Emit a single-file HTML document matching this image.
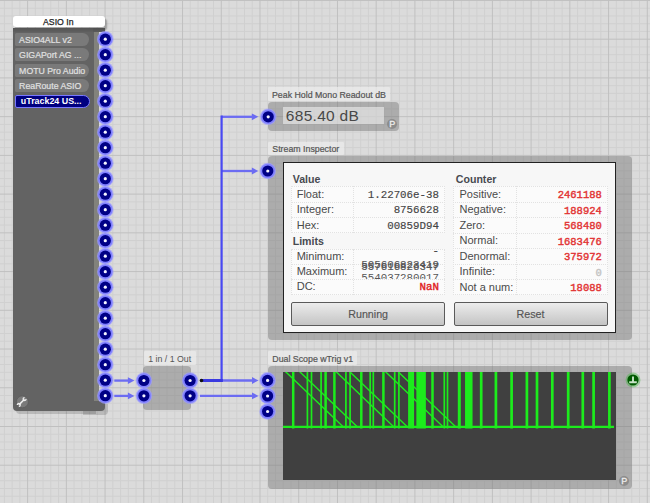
<!DOCTYPE html>
<html><head><meta charset="utf-8"><style>
html,body{margin:0;padding:0;}
body{width:650px;height:503px;position:relative;overflow:hidden;background:#dbdbdb;font-family:"Liberation Sans",sans-serif;}
.abs{position:absolute;}
.t{position:absolute;white-space:pre;line-height:1;}
.s{-webkit-text-stroke:0.25px currentColor;}
.mono{font-family:"Liberation Mono",monospace;}
</style></head>
<body>
<svg class="abs" width="650" height="503" style="left:0;top:0"><g stroke="#d0d0d0" stroke-width="1"><line x1="4.36" y1="0" x2="4.36" y2="503"/><line x1="12.11" y1="0" x2="12.11" y2="503"/><line x1="19.85" y1="0" x2="19.85" y2="503"/><line x1="35.35" y1="0" x2="35.35" y2="503"/><line x1="43.09" y1="0" x2="43.09" y2="503"/><line x1="50.84" y1="0" x2="50.84" y2="503"/><line x1="58.58" y1="0" x2="58.58" y2="503"/><line x1="74.08" y1="0" x2="74.08" y2="503"/><line x1="81.82" y1="0" x2="81.82" y2="503"/><line x1="89.57" y1="0" x2="89.57" y2="503"/><line x1="97.31" y1="0" x2="97.31" y2="503"/><line x1="112.81" y1="0" x2="112.81" y2="503"/><line x1="120.55" y1="0" x2="120.55" y2="503"/><line x1="128.30" y1="0" x2="128.30" y2="503"/><line x1="136.04" y1="0" x2="136.04" y2="503"/><line x1="151.54" y1="0" x2="151.54" y2="503"/><line x1="159.28" y1="0" x2="159.28" y2="503"/><line x1="167.03" y1="0" x2="167.03" y2="503"/><line x1="174.77" y1="0" x2="174.77" y2="503"/><line x1="190.27" y1="0" x2="190.27" y2="503"/><line x1="198.01" y1="0" x2="198.01" y2="503"/><line x1="205.76" y1="0" x2="205.76" y2="503"/><line x1="213.50" y1="0" x2="213.50" y2="503"/><line x1="229.00" y1="0" x2="229.00" y2="503"/><line x1="236.74" y1="0" x2="236.74" y2="503"/><line x1="244.49" y1="0" x2="244.49" y2="503"/><line x1="252.23" y1="0" x2="252.23" y2="503"/><line x1="267.73" y1="0" x2="267.73" y2="503"/><line x1="275.47" y1="0" x2="275.47" y2="503"/><line x1="283.22" y1="0" x2="283.22" y2="503"/><line x1="290.96" y1="0" x2="290.96" y2="503"/><line x1="306.46" y1="0" x2="306.46" y2="503"/><line x1="314.20" y1="0" x2="314.20" y2="503"/><line x1="321.95" y1="0" x2="321.95" y2="503"/><line x1="329.69" y1="0" x2="329.69" y2="503"/><line x1="345.19" y1="0" x2="345.19" y2="503"/><line x1="352.93" y1="0" x2="352.93" y2="503"/><line x1="360.68" y1="0" x2="360.68" y2="503"/><line x1="368.42" y1="0" x2="368.42" y2="503"/><line x1="383.92" y1="0" x2="383.92" y2="503"/><line x1="391.66" y1="0" x2="391.66" y2="503"/><line x1="399.41" y1="0" x2="399.41" y2="503"/><line x1="407.15" y1="0" x2="407.15" y2="503"/><line x1="422.65" y1="0" x2="422.65" y2="503"/><line x1="430.39" y1="0" x2="430.39" y2="503"/><line x1="438.14" y1="0" x2="438.14" y2="503"/><line x1="445.88" y1="0" x2="445.88" y2="503"/><line x1="461.38" y1="0" x2="461.38" y2="503"/><line x1="469.12" y1="0" x2="469.12" y2="503"/><line x1="476.87" y1="0" x2="476.87" y2="503"/><line x1="484.61" y1="0" x2="484.61" y2="503"/><line x1="500.11" y1="0" x2="500.11" y2="503"/><line x1="507.85" y1="0" x2="507.85" y2="503"/><line x1="515.60" y1="0" x2="515.60" y2="503"/><line x1="523.34" y1="0" x2="523.34" y2="503"/><line x1="538.84" y1="0" x2="538.84" y2="503"/><line x1="546.58" y1="0" x2="546.58" y2="503"/><line x1="554.33" y1="0" x2="554.33" y2="503"/><line x1="562.07" y1="0" x2="562.07" y2="503"/><line x1="577.57" y1="0" x2="577.57" y2="503"/><line x1="585.31" y1="0" x2="585.31" y2="503"/><line x1="593.06" y1="0" x2="593.06" y2="503"/><line x1="600.80" y1="0" x2="600.80" y2="503"/><line x1="616.30" y1="0" x2="616.30" y2="503"/><line x1="624.04" y1="0" x2="624.04" y2="503"/><line x1="631.79" y1="0" x2="631.79" y2="503"/><line x1="639.53" y1="0" x2="639.53" y2="503"/><line x1="0" y1="8.20" x2="650" y2="8.20"/><line x1="0" y1="15.94" x2="650" y2="15.94"/><line x1="0" y1="23.69" x2="650" y2="23.69"/><line x1="0" y1="31.43" x2="650" y2="31.43"/><line x1="0" y1="46.93" x2="650" y2="46.93"/><line x1="0" y1="54.67" x2="650" y2="54.67"/><line x1="0" y1="62.42" x2="650" y2="62.42"/><line x1="0" y1="70.16" x2="650" y2="70.16"/><line x1="0" y1="85.66" x2="650" y2="85.66"/><line x1="0" y1="93.40" x2="650" y2="93.40"/><line x1="0" y1="101.15" x2="650" y2="101.15"/><line x1="0" y1="108.89" x2="650" y2="108.89"/><line x1="0" y1="124.39" x2="650" y2="124.39"/><line x1="0" y1="132.13" x2="650" y2="132.13"/><line x1="0" y1="139.88" x2="650" y2="139.88"/><line x1="0" y1="147.62" x2="650" y2="147.62"/><line x1="0" y1="163.12" x2="650" y2="163.12"/><line x1="0" y1="170.86" x2="650" y2="170.86"/><line x1="0" y1="178.61" x2="650" y2="178.61"/><line x1="0" y1="186.35" x2="650" y2="186.35"/><line x1="0" y1="201.85" x2="650" y2="201.85"/><line x1="0" y1="209.59" x2="650" y2="209.59"/><line x1="0" y1="217.34" x2="650" y2="217.34"/><line x1="0" y1="225.08" x2="650" y2="225.08"/><line x1="0" y1="240.58" x2="650" y2="240.58"/><line x1="0" y1="248.32" x2="650" y2="248.32"/><line x1="0" y1="256.07" x2="650" y2="256.07"/><line x1="0" y1="263.81" x2="650" y2="263.81"/><line x1="0" y1="279.31" x2="650" y2="279.31"/><line x1="0" y1="287.05" x2="650" y2="287.05"/><line x1="0" y1="294.80" x2="650" y2="294.80"/><line x1="0" y1="302.54" x2="650" y2="302.54"/><line x1="0" y1="318.04" x2="650" y2="318.04"/><line x1="0" y1="325.78" x2="650" y2="325.78"/><line x1="0" y1="333.53" x2="650" y2="333.53"/><line x1="0" y1="341.27" x2="650" y2="341.27"/><line x1="0" y1="356.77" x2="650" y2="356.77"/><line x1="0" y1="364.51" x2="650" y2="364.51"/><line x1="0" y1="372.26" x2="650" y2="372.26"/><line x1="0" y1="380.00" x2="650" y2="380.00"/><line x1="0" y1="395.50" x2="650" y2="395.50"/><line x1="0" y1="403.24" x2="650" y2="403.24"/><line x1="0" y1="410.99" x2="650" y2="410.99"/><line x1="0" y1="418.73" x2="650" y2="418.73"/><line x1="0" y1="434.23" x2="650" y2="434.23"/><line x1="0" y1="441.97" x2="650" y2="441.97"/><line x1="0" y1="449.72" x2="650" y2="449.72"/><line x1="0" y1="457.46" x2="650" y2="457.46"/><line x1="0" y1="472.96" x2="650" y2="472.96"/><line x1="0" y1="480.70" x2="650" y2="480.70"/><line x1="0" y1="488.45" x2="650" y2="488.45"/><line x1="0" y1="496.19" x2="650" y2="496.19"/></g><g stroke="#c0c0c0" stroke-width="1"><line x1="27.60" y1="0" x2="27.60" y2="503"/><line x1="66.33" y1="0" x2="66.33" y2="503"/><line x1="105.06" y1="0" x2="105.06" y2="503"/><line x1="143.79" y1="0" x2="143.79" y2="503"/><line x1="182.52" y1="0" x2="182.52" y2="503"/><line x1="221.25" y1="0" x2="221.25" y2="503"/><line x1="259.98" y1="0" x2="259.98" y2="503"/><line x1="298.71" y1="0" x2="298.71" y2="503"/><line x1="337.44" y1="0" x2="337.44" y2="503"/><line x1="376.17" y1="0" x2="376.17" y2="503"/><line x1="414.90" y1="0" x2="414.90" y2="503"/><line x1="453.63" y1="0" x2="453.63" y2="503"/><line x1="492.36" y1="0" x2="492.36" y2="503"/><line x1="531.09" y1="0" x2="531.09" y2="503"/><line x1="569.82" y1="0" x2="569.82" y2="503"/><line x1="608.55" y1="0" x2="608.55" y2="503"/><line x1="647.28" y1="0" x2="647.28" y2="503"/><line x1="0" y1="0.45" x2="650" y2="0.45"/><line x1="0" y1="39.18" x2="650" y2="39.18"/><line x1="0" y1="77.91" x2="650" y2="77.91"/><line x1="0" y1="116.64" x2="650" y2="116.64"/><line x1="0" y1="155.37" x2="650" y2="155.37"/><line x1="0" y1="194.10" x2="650" y2="194.10"/><line x1="0" y1="232.83" x2="650" y2="232.83"/><line x1="0" y1="271.56" x2="650" y2="271.56"/><line x1="0" y1="310.29" x2="650" y2="310.29"/><line x1="0" y1="349.02" x2="650" y2="349.02"/><line x1="0" y1="387.75" x2="650" y2="387.75"/><line x1="0" y1="426.48" x2="650" y2="426.48"/><line x1="0" y1="465.21" x2="650" y2="465.21"/><line x1="0" y1="503.94" x2="650" y2="503.94"/></g></svg>
<div class="abs" style="left:15.3px;top:19.3px;width:92.2px;height:11px;border-radius:3px;background:rgba(0,0,0,0.22);box-shadow:0 0 1.5px 0.5px rgba(0,0,0,0.15)"></div>
<div class="abs" style="left:15.8px;top:30px;width:80.3px;height:384px;border-radius:0 0 0 4px;background:rgba(0,0,0,0.15)"></div>
<div class="abs" style="left:12.8px;top:27.5px;width:81px;height:383.2px;border-radius:0 0 0 4px;background:#636363"></div>
<div class="abs" style="left:83px;top:404px;width:25px;height:10.5px;border-radius:0 0 4px 0;background:rgba(0,0,0,0.15)"></div>
<div class="abs" style="left:80px;top:401px;width:25px;height:9.7px;border-radius:0 0 4px 0;background:#636363"></div>
<div class="abs" style="left:93.8px;top:31px;width:5.5px;height:370px;background:#82827c"></div>
<div class="abs" style="left:93px;top:27.5px;width:12px;height:4px;background:#5e5e5e"></div>
<div class="abs" style="left:12.8px;top:16.4px;width:92.2px;height:10.9px;border-radius:3px;background:#fff"></div>
<div class="t" style="left:12.2px;top:18.0px;width:92.2px;text-align:center;font-size:8.7px;color:#222;-webkit-text-stroke:0.25px #222">ASIO In</div>
<div class="abs" style="left:12.8px;top:27.5px;width:92.2px;height:4.5px;background:linear-gradient(rgba(0,0,0,0.16),rgba(0,0,0,0.04))"></div>
<div class="abs" style="left:15.4px;top:32.8px;width:74px;height:12.9px;border-radius:1.5px 6.4px 6.4px 1.5px;background:#7a7a7a"></div>
<div class="t" style="left:19.1px;top:35.599999999999994px;font-size:8.75px;color:#e0e0e0;-webkit-text-stroke:0.2px #e0e0e0">ASIO4ALL v2</div>
<div class="abs" style="left:15.4px;top:48.3px;width:74px;height:12.9px;border-radius:1.5px 6.4px 6.4px 1.5px;background:#7a7a7a"></div>
<div class="t" style="left:19.1px;top:51.099999999999994px;font-size:8.75px;color:#e0e0e0;-webkit-text-stroke:0.2px #e0e0e0">GIGAPort AG ...</div>
<div class="abs" style="left:15.4px;top:63.8px;width:74px;height:12.9px;border-radius:1.5px 6.4px 6.4px 1.5px;background:#7a7a7a"></div>
<div class="t" style="left:19.1px;top:66.6px;font-size:8.75px;color:#e0e0e0;-webkit-text-stroke:0.2px #e0e0e0">MOTU Pro Audio</div>
<div class="abs" style="left:15.4px;top:79.3px;width:74px;height:12.9px;border-radius:1.5px 6.4px 6.4px 1.5px;background:#7a7a7a"></div>
<div class="t" style="left:19.1px;top:82.1px;font-size:8.75px;color:#e0e0e0;-webkit-text-stroke:0.2px #e0e0e0">ReaRoute ASIO</div>
<div class="abs" style="left:15.4px;top:94.8px;width:74.4px;height:13.3px;border-radius:2px 6.6px 6.6px 2px;background:#000080;box-sizing:border-box;border:1.6px solid #7878ff"></div>
<div class="t" style="left:20.8px;top:97.39999999999999px;font-size:8.9px;color:#fff;font-weight:bold">uTrack24 US...</div>
<svg class="abs" width="24" height="24" style="left:10px;top:390px"><circle cx="12.4" cy="11.8" r="6" fill="#7a7a7a" stroke="#5c5c5c" stroke-width="0.8"/><path d="M9.4 14.4 L14 9.8" stroke="#f0f0f0" stroke-width="1.5" stroke-linecap="round"/><path d="M16.1 9.1 A1.5 1.5 0 1 1 14.6 7.6" stroke="#f0f0f0" stroke-width="1.3" fill="none"/><path d="M8.8 16.5 A1.5 1.5 0 1 0 7.3 15.0" stroke="#f0f0f0" stroke-width="1.3" fill="none"/></svg>
<div class="abs" style="left:144.2px;top:351.2px;width:52.1px;height:13.6px;background:rgba(236,236,236,0.72);border-radius:1px"></div>
<div class="t" style="left:148.5px;top:354.4px;font-size:8.8px;color:#555;-webkit-text-stroke:0.2px #555"></div>
<div class="t" style="left:143.9px;top:354.8px;width:51.5px;text-align:center;font-size:8.8px;color:#555">1 in / 1 Out</div>
<div class="abs" style="left:143.2px;top:365.8px;width:47.5px;height:44.4px;background:rgba(115,115,115,0.45);border-radius:4px"></div>
<div class="abs" style="left:267.7px;top:87.3px;width:122.5px;height:13.8px;background:rgba(236,236,236,0.72);border-radius:1px"></div>
<div class="t" style="left:272.0px;top:90.5px;font-size:8.8px;color:#555;-webkit-text-stroke:0.2px #555">Peak Hold Mono Readout dB</div>
<div class="abs" style="left:267.9px;top:102.2px;width:131px;height:28.4px;background:rgba(115,115,115,0.45);border-radius:4px"></div>
<div class="abs" style="left:283px;top:106.8px;width:101.2px;height:16.9px;background:rgba(240,240,240,0.6)"></div>
<div class="t" style="left:285.8px;top:108.4px;font-size:15.5px;color:#484848;letter-spacing:0.3px">685.40 dB</div>
<svg class="abs" width="14" height="14" style="left:384.8px;top:117.1px"><circle cx="7" cy="7" r="5" fill="#8c8c8c"/><text x="7.2" y="10.4" text-anchor="middle" font-family="Liberation Sans" font-size="9" fill="#eeeeee" stroke="#eeeeee" stroke-width="0.3">P</text></svg>
<div class="abs" style="left:268px;top:141.7px;width:76px;height:12.9px;background:rgba(236,236,236,0.72);border-radius:1px"></div>
<div class="t" style="left:272.3px;top:144.89999999999998px;font-size:8.8px;color:#555;-webkit-text-stroke:0.2px #555">Stream Inspector</div>
<div class="abs" style="left:268px;top:155.8px;width:363.5px;height:184.7px;background:rgba(115,115,115,0.45);border-radius:4px"></div>
<div class="abs" style="left:283.3px;top:162.0px;width:332.5px;height:171px;background:#f7f7f7;box-sizing:border-box;border:1.5px solid #222"></div>
<div class="abs" style="left:268px;top:351.3px;width:88.5px;height:13.4px;background:rgba(236,236,236,0.72);border-radius:1px"></div>
<div class="t" style="left:272.3px;top:354.5px;font-size:8.8px;color:#555;-webkit-text-stroke:0.2px #555">Dual Scope wTrig v1</div>
<div class="abs" style="left:268px;top:365.5px;width:364px;height:123.2px;background:rgba(115,115,115,0.45);border-radius:4px"></div>
<div class="abs" style="left:283.3px;top:372.4px;width:332.5px;height:108.1px;background:#404040"></div>
<svg class="abs" width="20" height="20" style="left:614.4px;top:470.5px"><circle cx="10" cy="10" r="5" fill="#8c8c8c"/><text x="10.2" y="13.4" text-anchor="middle" font-family="Liberation Sans" font-size="9" fill="#eeeeee" stroke="#eeeeee" stroke-width="0.3">P</text></svg>
<svg class="abs" width="20" height="20" style="left:622.5px;top:370.3px"><circle cx="10" cy="10" r="7.5" fill="rgba(60,180,60,0.4)"/><circle cx="10" cy="10" r="5.6" fill="#005a00"/><path d="M10 6.6 V11.6 M6.2 12.3 H13.8" stroke="#c8e4c8" stroke-width="1.9"/></svg>
<div class="t" style="left:292.7px;top:174.0271px;font-size:10.6px;font-weight:bold;color:#474a50">Value</div>
<div class="abs" style="left:290.8px;top:186.2px;width:154.6px;height:46.5px;box-sizing:border-box;border:1px dotted #e2e2e2;background:rgba(255,255,255,0.5)"></div>
<div class="abs" style="left:290.8px;top:201.7px;width:154.6px;height:0px;border-top:1px dotted #e2e2e2"></div>
<div class="abs" style="left:290.8px;top:217.2px;width:154.6px;height:0px;border-top:1px dotted #e2e2e2"></div>
<div class="abs" style="left:353.1px;top:186.2px;width:0px;height:46.5px;border-left:1px dotted #e2e2e2"></div>
<div class="t" style="left:296.7px;top:188.9885px;font-size:11.0px;color:#4a4a4a">Float:</div>
<div class="t mono" style="right:211px;top:189.82px;font-size:10.8px;color:#444;-webkit-text-stroke:0.15px #444;">1.22706e-38</div>
<div class="t" style="left:296.7px;top:204.4885px;font-size:11.0px;color:#4a4a4a">Integer:</div>
<div class="t mono" style="right:211px;top:205.32px;font-size:10.8px;color:#444;-webkit-text-stroke:0.15px #444;">8756628</div>
<div class="t" style="left:296.7px;top:219.9885px;font-size:11.0px;color:#4a4a4a">Hex:</div>
<div class="t mono" style="right:211px;top:220.82px;font-size:10.8px;color:#444;-webkit-text-stroke:0.15px #444;">00859D94</div>
<div class="t" style="left:292.7px;top:235.9271px;font-size:10.6px;font-weight:bold;color:#474a50">Limits</div>
<div class="abs" style="left:290.8px;top:248.8px;width:154.6px;height:45.900000000000006px;box-sizing:border-box;border:1px dotted #e2e2e2;background:rgba(255,255,255,0.5)"></div>
<div class="abs" style="left:290.8px;top:264.1px;width:154.6px;height:0px;border-top:1px dotted #e2e2e2"></div>
<div class="abs" style="left:290.8px;top:279.40000000000003px;width:154.6px;height:0px;border-top:1px dotted #e2e2e2"></div>
<div class="abs" style="left:353.1px;top:248.8px;width:0px;height:45.900000000000006px;border-left:1px dotted #e2e2e2"></div>
<div class="t" style="left:296.7px;top:250.9885px;font-size:11.0px;color:#4a4a4a">Minimum:</div>
<div class="t" style="left:296.7px;top:266.0885px;font-size:11.0px;color:#4a4a4a">Maximum:</div>
<div class="t" style="left:296.7px;top:281.4885px;font-size:11.0px;color:#4a4a4a">DC:</div>
<div class="t mono" style="right:211px;top:246.12px;font-size:10.8px;color:#444;-webkit-text-stroke:0.15px #444;">-</div>
<div class="t mono" style="right:211px;top:259.62px;font-size:10.8px;color:#555;-webkit-text-stroke:0.15px #555;">505606823419</div>
<div class="t mono" style="right:211px;top:261.62px;font-size:10.8px;color:#555;-webkit-text-stroke:0.15px #555;">557616826347</div>
<div class="abs" style="left:354px;top:272px;width:90px;height:7px;overflow:hidden">
<div class="t mono" style="right:5px;top:1px;font-size:10.8px;color:#555">554037280017</div></div>
<div class="t mono" style="right:211px;top:282.32px;font-size:10.8px;color:#e02020;-webkit-text-stroke:0.4px #e02020;">NaN</div>
<div class="t" style="left:455.8px;top:174.0271px;font-size:10.6px;font-weight:bold;color:#474a50">Counter</div>
<div class="abs" style="left:453.3px;top:186.2px;width:154.7px;height:108.5px;box-sizing:border-box;border:1px dotted #e2e2e2;background:rgba(255,255,255,0.5)"></div>
<div class="abs" style="left:453.3px;top:201.7px;width:154.7px;height:0px;border-top:1px dotted #e2e2e2"></div>
<div class="abs" style="left:453.3px;top:217.2px;width:154.7px;height:0px;border-top:1px dotted #e2e2e2"></div>
<div class="abs" style="left:453.3px;top:232.7px;width:154.7px;height:0px;border-top:1px dotted #e2e2e2"></div>
<div class="abs" style="left:453.3px;top:248.2px;width:154.7px;height:0px;border-top:1px dotted #e2e2e2"></div>
<div class="abs" style="left:453.3px;top:263.7px;width:154.7px;height:0px;border-top:1px dotted #e2e2e2"></div>
<div class="abs" style="left:453.3px;top:279.2px;width:154.7px;height:0px;border-top:1px dotted #e2e2e2"></div>
<div class="abs" style="left:515.7px;top:186.2px;width:0px;height:108.5px;border-left:1px dotted #e2e2e2"></div>
<div class="t" style="left:459.5px;top:188.9885px;font-size:11.0px;color:#4a4a4a">Positive:</div>
<div class="t mono" style="right:48.200000000000045px;top:190.05px;font-size:10.5px;color:#e23434;-webkit-text-stroke:0.4px #e23434;">2461188</div>
<div class="t" style="left:459.5px;top:204.4885px;font-size:11.0px;color:#4a4a4a">Negative:</div>
<div class="t mono" style="right:48.200000000000045px;top:205.55px;font-size:10.5px;color:#e23434;-webkit-text-stroke:0.4px #e23434;">188924</div>
<div class="t" style="left:459.5px;top:219.9885px;font-size:11.0px;color:#4a4a4a">Zero:</div>
<div class="t mono" style="right:48.200000000000045px;top:221.05px;font-size:10.5px;color:#e23434;-webkit-text-stroke:0.4px #e23434;">568480</div>
<div class="t" style="left:459.5px;top:235.4885px;font-size:11.0px;color:#4a4a4a">Normal:</div>
<div class="t mono" style="right:48.200000000000045px;top:236.55px;font-size:10.5px;color:#e23434;-webkit-text-stroke:0.4px #e23434;">1683476</div>
<div class="t" style="left:459.5px;top:250.9885px;font-size:11.0px;color:#4a4a4a">Denormal:</div>
<div class="t mono" style="right:48.200000000000045px;top:252.05px;font-size:10.5px;color:#e23434;-webkit-text-stroke:0.4px #e23434;">375972</div>
<div class="t" style="left:459.5px;top:266.4885px;font-size:11.0px;color:#4a4a4a">Infinite:</div>
<div class="t mono" style="right:48.200000000000045px;top:267.55px;font-size:10.5px;color:#c4c4c4;-webkit-text-stroke:0.4px #c4c4c4;">0</div>
<div class="t" style="left:459.5px;top:281.9885px;font-size:11.0px;color:#4a4a4a">Not a num:</div>
<div class="t mono" style="right:48.200000000000045px;top:283.05px;font-size:10.5px;color:#e23434;-webkit-text-stroke:0.4px #e23434;">18088</div>
<div class="abs" style="left:290.8px;top:302.3px;width:154.7px;height:23.5px;box-sizing:border-box;border:1.3px solid #5a5a5a;border-radius:2px;background:linear-gradient(#ececec,#c4c4c4);"></div>
<div class="t" style="left:290.8px;top:308.90000000000003px;width:154.7px;text-align:center;font-size:10.7px;color:#555;-webkit-text-stroke:0.15px #555">Running</div>
<div class="abs" style="left:453.5px;top:302.3px;width:154px;height:23.5px;box-sizing:border-box;border:1.3px solid #5a5a5a;border-radius:2px;background:linear-gradient(#ececec,#c4c4c4);"></div>
<div class="t" style="left:453.5px;top:308.90000000000003px;width:154px;text-align:center;font-size:10.7px;color:#555;-webkit-text-stroke:0.15px #555">Reset</div>
<svg class="abs" width="332.5" height="108.5" style="left:283.3px;top:372.4px"><defs><clipPath id="sc"><rect x="0" y="0" width="187" height="56"/></clipPath></defs><line x1="10.20" y1="0" x2="10.20" y2="56.5" stroke="#1cec1c" stroke-width="2.5"/><line x1="24.40" y1="0" x2="24.40" y2="56.5" stroke="#1cec1c" stroke-width="1.7"/><line x1="28.50" y1="0" x2="28.50" y2="56.5" stroke="#1cec1c" stroke-width="1.7"/><line x1="38.10" y1="0" x2="38.10" y2="56.5" stroke="#1cec1c" stroke-width="1.7"/><line x1="42.60" y1="0" x2="42.60" y2="56.5" stroke="#1cec1c" stroke-width="2.5"/><line x1="51.40" y1="0" x2="51.40" y2="56.5" stroke="#1cec1c" stroke-width="2.5"/><line x1="62.90" y1="0" x2="62.90" y2="56.5" stroke="#1cec1c" stroke-width="1.7"/><line x1="67.10" y1="0" x2="67.10" y2="56.5" stroke="#1cec1c" stroke-width="1.7"/><line x1="78.30" y1="0" x2="78.30" y2="56.5" stroke="#1cec1c" stroke-width="2.5"/><line x1="87.20" y1="0" x2="87.20" y2="56.5" stroke="#1cec1c" stroke-width="1.7"/><line x1="90.30" y1="0" x2="90.30" y2="56.5" stroke="#1cec1c" stroke-width="1.7"/><line x1="100.40" y1="0" x2="100.40" y2="56.5" stroke="#1cec1c" stroke-width="2.5"/><line x1="111.70" y1="0" x2="111.70" y2="56.5" stroke="#1cec1c" stroke-width="1.7"/><line x1="115.90" y1="0" x2="115.90" y2="56.5" stroke="#1cec1c" stroke-width="1.7"/><line x1="128.10" y1="0" x2="128.10" y2="56.5" stroke="#1cec1c" stroke-width="6"/><line x1="138.10" y1="0" x2="138.10" y2="56.5" stroke="#1cec1c" stroke-width="9.5"/><line x1="149.50" y1="0" x2="149.50" y2="56.5" stroke="#1cec1c" stroke-width="2.5"/><line x1="161.30" y1="0" x2="161.30" y2="56.5" stroke="#1cec1c" stroke-width="1.7"/><line x1="164.50" y1="0" x2="164.50" y2="56.5" stroke="#1cec1c" stroke-width="1.7"/><line x1="176.30" y1="0" x2="176.30" y2="56.5" stroke="#1cec1c" stroke-width="3"/><line x1="185.80" y1="0" x2="185.80" y2="56.5" stroke="#1cec1c" stroke-width="7.5"/><line x1="198.20" y1="0" x2="198.20" y2="56.5" stroke="#1cec1c" stroke-width="2.7"/><line x1="212.90" y1="0" x2="212.90" y2="56.5" stroke="#1cec1c" stroke-width="2.7"/><line x1="228.60" y1="0" x2="228.60" y2="56.5" stroke="#1cec1c" stroke-width="2.7"/><line x1="243.90" y1="0" x2="243.90" y2="56.5" stroke="#1cec1c" stroke-width="2.7"/><line x1="254.00" y1="0" x2="254.00" y2="56.5" stroke="#1cec1c" stroke-width="2.7"/><line x1="269.30" y1="0" x2="269.30" y2="56.5" stroke="#1cec1c" stroke-width="2.7"/><line x1="285.20" y1="0" x2="285.20" y2="56.5" stroke="#1cec1c" stroke-width="2.7"/><line x1="299.80" y1="0" x2="299.80" y2="56.5" stroke="#1cec1c" stroke-width="2.7"/><line x1="310.60" y1="0" x2="310.60" y2="56.5" stroke="#1cec1c" stroke-width="2.7"/><line x1="326.40" y1="0" x2="326.40" y2="56.5" stroke="#1cec1c" stroke-width="2.7"/><line x1="0" y1="54.9" x2="331" y2="54.9" stroke="#1cec1c" stroke-width="2.3"/><g clip-path="url(#sc)"><line x1="2.40" y1="-0.5" x2="60.40" y2="55" stroke="#1cec1c" stroke-width="1.4"/><line x1="16.50" y1="-0.5" x2="74.50" y2="55" stroke="#1cec1c" stroke-width="1.4"/><line x1="52.90" y1="-0.5" x2="110.90" y2="55" stroke="#1cec1c" stroke-width="1.4"/><line x1="66.50" y1="-0.5" x2="124.50" y2="55" stroke="#1cec1c" stroke-width="1.4"/><line x1="102.30" y1="-0.5" x2="160.30" y2="55" stroke="#1cec1c" stroke-width="1.4"/><line x1="114.90" y1="-0.5" x2="172.90" y2="55" stroke="#1cec1c" stroke-width="1.4"/></g></svg>
<svg class="abs" width="650" height="503" style="left:0;top:0">
<line x1="114.3" y1="380.6" x2="128.4" y2="380.6" stroke="#6c6cf2" stroke-width="2.3"/><path d="M127.9 377.20000000000005 L134.4 380.6 L127.9 384.0 Z" fill="#6c6cf2"/><line x1="114.3" y1="395.9" x2="128.4" y2="395.9" stroke="#6c6cf2" stroke-width="2.3"/><path d="M127.9 392.5 L134.4 395.9 L127.9 399.29999999999995 Z" fill="#6c6cf2"/><line x1="200" y1="380.5" x2="252.5" y2="380.5" stroke="#6c6cf2" stroke-width="2.3"/><path d="M252.0 377.1 L258.5 380.5 L252.0 383.9 Z" fill="#6c6cf2"/><line x1="200" y1="395.9" x2="252.5" y2="395.9" stroke="#6c6cf2" stroke-width="2.3"/><path d="M252.0 392.5 L258.5 395.9 L252.0 399.29999999999995 Z" fill="#6c6cf2"/><line x1="221.6" y1="116.8" x2="252.3" y2="116.8" stroke="#6c6cf2" stroke-width="2.3"/><path d="M251.8 113.39999999999999 L258.3 116.8 L251.8 120.2 Z" fill="#6c6cf2"/><line x1="221.6" y1="171" x2="252.3" y2="171" stroke="#6c6cf2" stroke-width="2.3"/><path d="M251.8 167.6 L258.3 171 L251.8 174.4 Z" fill="#6c6cf2"/><line x1="221.6" y1="115.5" x2="221.6" y2="381.8" stroke="#4848f2" stroke-width="2.2"/><line x1="201" y1="380.5" x2="222.8" y2="380.5" stroke="#3a3ae0" stroke-width="3"/><circle cx="201.5" cy="380.5" r="1.8" fill="#111"/>
<circle cx="105.3" cy="39.2" r="8.3" fill="#9c9cff" opacity="0.7"/><circle cx="105.3" cy="39.2" r="7.3" fill="#8080ff"/><circle cx="105.3" cy="39.2" r="5.6" fill="#000086"/><circle cx="105.3" cy="39.2" r="1.6" fill="#f4f4ff"/><circle cx="105.3" cy="54.7" r="8.3" fill="#9c9cff" opacity="0.7"/><circle cx="105.3" cy="54.7" r="7.3" fill="#8080ff"/><circle cx="105.3" cy="54.7" r="5.6" fill="#000086"/><circle cx="105.3" cy="54.7" r="1.6" fill="#f4f4ff"/><circle cx="105.3" cy="70.2" r="8.3" fill="#9c9cff" opacity="0.7"/><circle cx="105.3" cy="70.2" r="7.3" fill="#8080ff"/><circle cx="105.3" cy="70.2" r="5.6" fill="#000086"/><circle cx="105.3" cy="70.2" r="1.6" fill="#f4f4ff"/><circle cx="105.3" cy="85.7" r="8.3" fill="#9c9cff" opacity="0.7"/><circle cx="105.3" cy="85.7" r="7.3" fill="#8080ff"/><circle cx="105.3" cy="85.7" r="5.6" fill="#000086"/><circle cx="105.3" cy="85.7" r="1.6" fill="#f4f4ff"/><circle cx="105.3" cy="101.2" r="8.3" fill="#9c9cff" opacity="0.7"/><circle cx="105.3" cy="101.2" r="7.3" fill="#8080ff"/><circle cx="105.3" cy="101.2" r="5.6" fill="#000086"/><circle cx="105.3" cy="101.2" r="1.6" fill="#f4f4ff"/><circle cx="105.3" cy="116.7" r="8.3" fill="#9c9cff" opacity="0.7"/><circle cx="105.3" cy="116.7" r="7.3" fill="#8080ff"/><circle cx="105.3" cy="116.7" r="5.6" fill="#000086"/><circle cx="105.3" cy="116.7" r="1.6" fill="#f4f4ff"/><circle cx="105.3" cy="132.2" r="8.3" fill="#9c9cff" opacity="0.7"/><circle cx="105.3" cy="132.2" r="7.3" fill="#8080ff"/><circle cx="105.3" cy="132.2" r="5.6" fill="#000086"/><circle cx="105.3" cy="132.2" r="1.6" fill="#f4f4ff"/><circle cx="105.3" cy="147.7" r="8.3" fill="#9c9cff" opacity="0.7"/><circle cx="105.3" cy="147.7" r="7.3" fill="#8080ff"/><circle cx="105.3" cy="147.7" r="5.6" fill="#000086"/><circle cx="105.3" cy="147.7" r="1.6" fill="#f4f4ff"/><circle cx="105.3" cy="163.2" r="8.3" fill="#9c9cff" opacity="0.7"/><circle cx="105.3" cy="163.2" r="7.3" fill="#8080ff"/><circle cx="105.3" cy="163.2" r="5.6" fill="#000086"/><circle cx="105.3" cy="163.2" r="1.6" fill="#f4f4ff"/><circle cx="105.3" cy="178.7" r="8.3" fill="#9c9cff" opacity="0.7"/><circle cx="105.3" cy="178.7" r="7.3" fill="#8080ff"/><circle cx="105.3" cy="178.7" r="5.6" fill="#000086"/><circle cx="105.3" cy="178.7" r="1.6" fill="#f4f4ff"/><circle cx="105.3" cy="194.2" r="8.3" fill="#9c9cff" opacity="0.7"/><circle cx="105.3" cy="194.2" r="7.3" fill="#8080ff"/><circle cx="105.3" cy="194.2" r="5.6" fill="#000086"/><circle cx="105.3" cy="194.2" r="1.6" fill="#f4f4ff"/><circle cx="105.3" cy="209.7" r="8.3" fill="#9c9cff" opacity="0.7"/><circle cx="105.3" cy="209.7" r="7.3" fill="#8080ff"/><circle cx="105.3" cy="209.7" r="5.6" fill="#000086"/><circle cx="105.3" cy="209.7" r="1.6" fill="#f4f4ff"/><circle cx="105.3" cy="225.2" r="8.3" fill="#9c9cff" opacity="0.7"/><circle cx="105.3" cy="225.2" r="7.3" fill="#8080ff"/><circle cx="105.3" cy="225.2" r="5.6" fill="#000086"/><circle cx="105.3" cy="225.2" r="1.6" fill="#f4f4ff"/><circle cx="105.3" cy="240.7" r="8.3" fill="#9c9cff" opacity="0.7"/><circle cx="105.3" cy="240.7" r="7.3" fill="#8080ff"/><circle cx="105.3" cy="240.7" r="5.6" fill="#000086"/><circle cx="105.3" cy="240.7" r="1.6" fill="#f4f4ff"/><circle cx="105.3" cy="256.2" r="8.3" fill="#9c9cff" opacity="0.7"/><circle cx="105.3" cy="256.2" r="7.3" fill="#8080ff"/><circle cx="105.3" cy="256.2" r="5.6" fill="#000086"/><circle cx="105.3" cy="256.2" r="1.6" fill="#f4f4ff"/><circle cx="105.3" cy="271.7" r="8.3" fill="#9c9cff" opacity="0.7"/><circle cx="105.3" cy="271.7" r="7.3" fill="#8080ff"/><circle cx="105.3" cy="271.7" r="5.6" fill="#000086"/><circle cx="105.3" cy="271.7" r="1.6" fill="#f4f4ff"/><circle cx="105.3" cy="287.2" r="8.3" fill="#9c9cff" opacity="0.7"/><circle cx="105.3" cy="287.2" r="7.3" fill="#8080ff"/><circle cx="105.3" cy="287.2" r="5.6" fill="#000086"/><circle cx="105.3" cy="287.2" r="1.6" fill="#f4f4ff"/><circle cx="105.3" cy="302.7" r="8.3" fill="#9c9cff" opacity="0.7"/><circle cx="105.3" cy="302.7" r="7.3" fill="#8080ff"/><circle cx="105.3" cy="302.7" r="5.6" fill="#000086"/><circle cx="105.3" cy="302.7" r="1.6" fill="#f4f4ff"/><circle cx="105.3" cy="318.2" r="8.3" fill="#9c9cff" opacity="0.7"/><circle cx="105.3" cy="318.2" r="7.3" fill="#8080ff"/><circle cx="105.3" cy="318.2" r="5.6" fill="#000086"/><circle cx="105.3" cy="318.2" r="1.6" fill="#f4f4ff"/><circle cx="105.3" cy="333.7" r="8.3" fill="#9c9cff" opacity="0.7"/><circle cx="105.3" cy="333.7" r="7.3" fill="#8080ff"/><circle cx="105.3" cy="333.7" r="5.6" fill="#000086"/><circle cx="105.3" cy="333.7" r="1.6" fill="#f4f4ff"/><circle cx="105.3" cy="349.2" r="8.3" fill="#9c9cff" opacity="0.7"/><circle cx="105.3" cy="349.2" r="7.3" fill="#8080ff"/><circle cx="105.3" cy="349.2" r="5.6" fill="#000086"/><circle cx="105.3" cy="349.2" r="1.6" fill="#f4f4ff"/><circle cx="105.3" cy="364.7" r="8.3" fill="#9c9cff" opacity="0.7"/><circle cx="105.3" cy="364.7" r="7.3" fill="#8080ff"/><circle cx="105.3" cy="364.7" r="5.6" fill="#000086"/><circle cx="105.3" cy="364.7" r="1.6" fill="#f4f4ff"/><circle cx="105.3" cy="380.2" r="8.3" fill="#9c9cff" opacity="0.7"/><circle cx="105.3" cy="380.2" r="7.3" fill="#8080ff"/><circle cx="105.3" cy="380.2" r="5.6" fill="#000086"/><circle cx="105.3" cy="380.2" r="1.6" fill="#f4f4ff"/><circle cx="105.3" cy="395.7" r="8.3" fill="#9c9cff" opacity="0.7"/><circle cx="105.3" cy="395.7" r="7.3" fill="#8080ff"/><circle cx="105.3" cy="395.7" r="5.6" fill="#000086"/><circle cx="105.3" cy="395.7" r="1.6" fill="#f4f4ff"/><circle cx="143.9" cy="380.5" r="8.3" fill="#9c9cff" opacity="0.7"/><circle cx="143.9" cy="380.5" r="7.3" fill="#8080ff"/><circle cx="143.9" cy="380.5" r="5.6" fill="#000086"/><circle cx="143.9" cy="380.5" r="1.6" fill="#f4f4ff"/><circle cx="143.9" cy="395.8" r="8.3" fill="#9c9cff" opacity="0.7"/><circle cx="143.9" cy="395.8" r="7.3" fill="#8080ff"/><circle cx="143.9" cy="395.8" r="5.6" fill="#000086"/><circle cx="143.9" cy="395.8" r="1.6" fill="#f4f4ff"/><circle cx="190.1" cy="380.5" r="8.3" fill="#9c9cff" opacity="0.7"/><circle cx="190.1" cy="380.5" r="7.3" fill="#8080ff"/><circle cx="190.1" cy="380.5" r="5.6" fill="#000086"/><circle cx="190.1" cy="380.5" r="1.6" fill="#f4f4ff"/><circle cx="190.1" cy="395.8" r="8.3" fill="#9c9cff" opacity="0.7"/><circle cx="190.1" cy="395.8" r="7.3" fill="#8080ff"/><circle cx="190.1" cy="395.8" r="5.6" fill="#000086"/><circle cx="190.1" cy="395.8" r="1.6" fill="#f4f4ff"/><circle cx="268.2" cy="116.8" r="8.3" fill="#9c9cff" opacity="0.7"/><circle cx="268.2" cy="116.8" r="7.3" fill="#8080ff"/><circle cx="268.2" cy="116.8" r="5.6" fill="#000086"/><circle cx="268.2" cy="116.8" r="1.6" fill="#f4f4ff"/><circle cx="267.8" cy="171" r="8.3" fill="#9c9cff" opacity="0.7"/><circle cx="267.8" cy="171" r="7.3" fill="#8080ff"/><circle cx="267.8" cy="171" r="5.6" fill="#000086"/><circle cx="267.8" cy="171" r="1.6" fill="#f4f4ff"/><circle cx="267.6" cy="380.4" r="8.3" fill="#9c9cff" opacity="0.7"/><circle cx="267.6" cy="380.4" r="7.3" fill="#8080ff"/><circle cx="267.6" cy="380.4" r="5.6" fill="#000086"/><circle cx="267.6" cy="380.4" r="1.6" fill="#f4f4ff"/><circle cx="267.6" cy="396" r="8.3" fill="#9c9cff" opacity="0.7"/><circle cx="267.6" cy="396" r="7.3" fill="#8080ff"/><circle cx="267.6" cy="396" r="5.6" fill="#000086"/><circle cx="267.6" cy="396" r="1.6" fill="#f4f4ff"/><circle cx="267.6" cy="411.5" r="8.3" fill="#9c9cff" opacity="0.7"/><circle cx="267.6" cy="411.5" r="7.3" fill="#8080ff"/><circle cx="267.6" cy="411.5" r="5.6" fill="#000086"/><circle cx="267.6" cy="411.5" r="1.6" fill="#f4f4ff"/>
</svg>
</body></html>
